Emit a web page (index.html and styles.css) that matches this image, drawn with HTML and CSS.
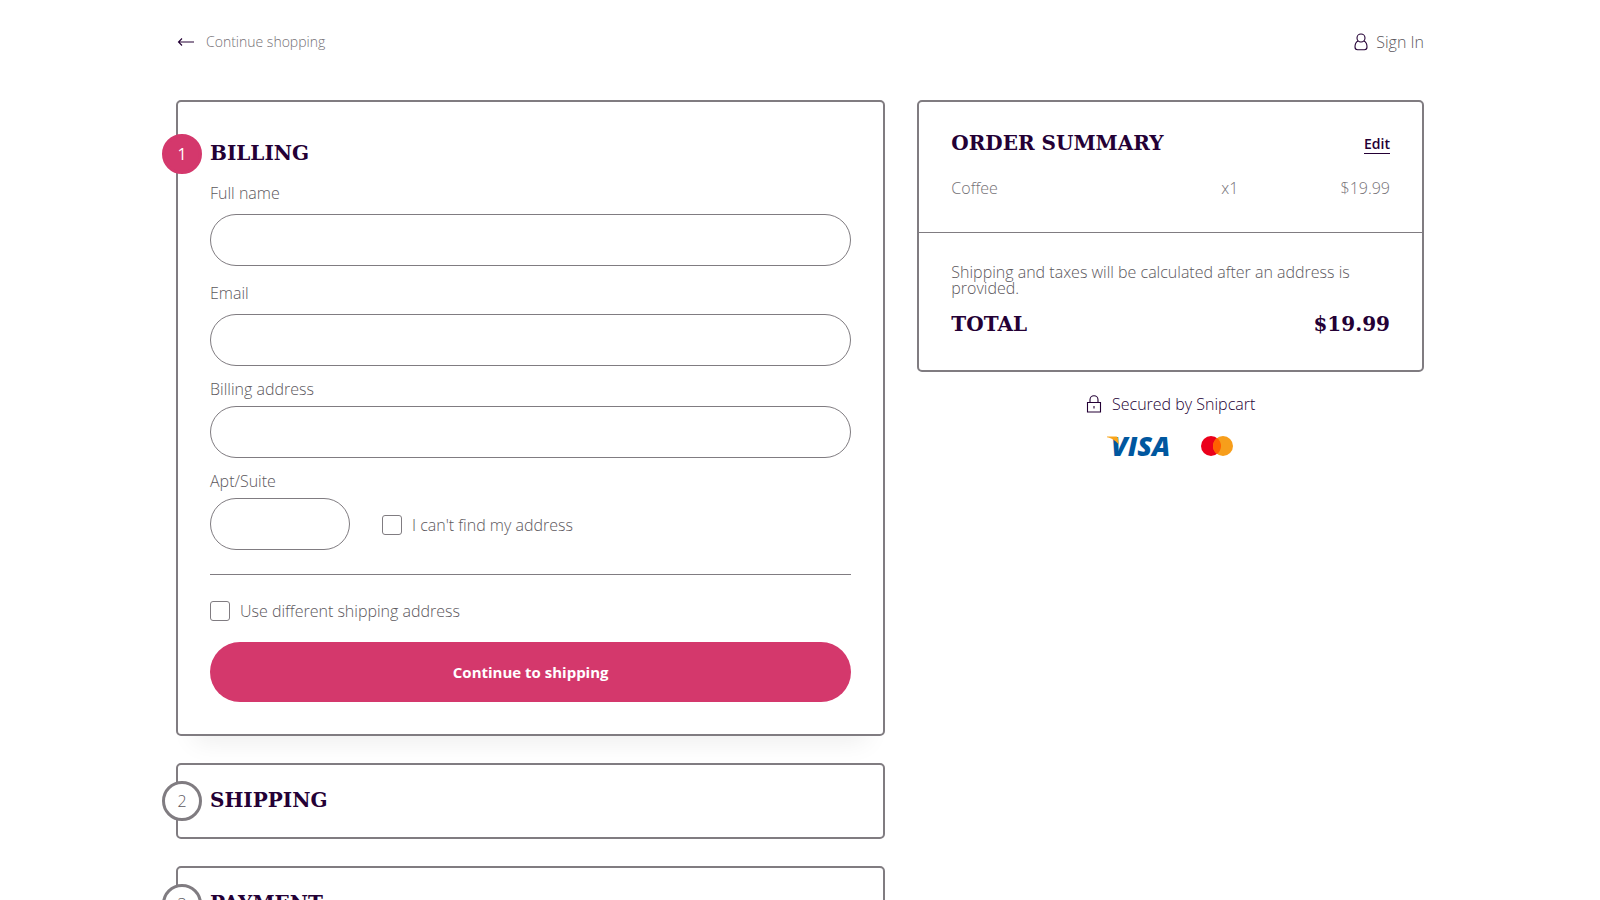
FILE: index.html
```html
<!DOCTYPE html>
<html lang="en">
<head>
<meta charset="utf-8">
<meta name="viewport" content="width=device-width, initial-scale=1">
<title>Checkout</title>
<link rel="stylesheet" href="styles.css">
</head>
<body>
<div class="page">
  <header class="topbar">
    <a class="back" href="#">
      <svg class="back-icon" width="18" height="10" viewBox="0 0 18 10" aria-hidden="true"><path d="M17 5H1.5M5 1.500 1.500 5 5 8.500"/></svg>
      <span>Continue shopping</span>
    </a>
    <a class="signin" href="#">
      <svg class="line-icon" width="14" height="18" viewBox="0 0 14 18" aria-hidden="true"><circle cx="7" cy="5" r="4"/><path d="M4 8C2 9 1 11 1 14c0 2 .7 2.700 2.500 2.700h7c1.800 0 2.500-.7 2.500-2.700 0-3-1-5-3-6"/></svg>
      <span>Sign In</span>
    </a>
  </header>
  <div class="columns">
    <main class="steps">
      <section class="card step step-active">
        <div class="step-head">
          <span class="badge badge-active">1</span>
          <h2 class="title">BILLING</h2>
        </div>
        <form class="form">
          <div class="field field-wide">
            <label for="name">Full name</label>
            <input class="text-input" id="name" type="text">
          </div>
          <div class="field field-wide">
            <label for="email">Email</label>
            <input class="text-input" id="email" type="email">
          </div>
          <div class="field">
            <label for="address">Billing address</label>
            <input class="text-input" id="address" type="text">
          </div>
          <div class="apt-row">
            <div class="field apt">
              <label for="apt">Apt/Suite</label>
              <input class="text-input" id="apt" type="text">
            </div>
            <label class="check check-apt"><input type="checkbox"><span>I can't find my address</span></label>
          </div>
          <hr class="rule">
          <label class="check"><input type="checkbox"><span>Use different shipping address</span></label>
          <button class="submit" type="button">Continue to shipping</button>
        </form>
      </section>
      <section class="card step">
        <div class="step-head">
          <span class="badge">2</span>
          <h2 class="title">SHIPPING</h2>
        </div>
      </section>
      <section class="card step">
        <div class="step-head">
          <span class="badge">3</span>
          <h2 class="title">PAYMENT</h2>
        </div>
      </section>
    </main>
    <aside class="side">
      <section class="card summary">
        <div class="summary-items">
          <div class="summary-head">
            <h2 class="title">ORDER SUMMARY</h2>
            <a class="edit" href="#">Edit</a>
          </div>
          <div class="item">
            <span>Coffee</span>
            <span class="qty">x1</span>
            <span class="price">$19.99</span>
          </div>
        </div>
        <div class="summary-total">
          <p class="note">Shipping and taxes will be calculated after an address is provided.</p>
          <div class="total title"><span>TOTAL</span><span>$19.99</span></div>
        </div>
      </section>
      <div class="secured">
        <svg class="line-icon" width="16" height="18" viewBox="0 0 16 18" aria-hidden="true"><path d="M1.500 7.500h13v9.500h-13zM4 7.500V4.800a4 4 0 0 1 8 0v2.700M8 11v2.500"/></svg>
        <span>Secured by Snipcart</span>
      </div>
      <div class="brands">
        <svg class="visa-logo" width="62" height="22" viewBox="0 0 62 22" role="img" aria-label="Visa">
          <text class="visa" x="4" y="21">VISA</text>
          <path fill="#f9a51a" d="M0 1.500h8.500c1.500 0 2.300.6 2.600 2L12 10C10 7 6 3.500 0 2.300z"/>
        </svg>
        <svg width="34" height="22" viewBox="0 0 34 22" role="img" aria-label="Mastercard">
          <circle cx="11" cy="11" r="10" fill="#eb001b"/>
          <circle cx="23" cy="11" r="10" fill="#f79e1b"/>
          <path fill="#ff5f00" d="M17 3a10 10 0 0 1 0 16 10 10 0 0 1 0-16z"/>
        </svg>
      </div>
    </aside>
  </div>
</div>
</body>
</html>
```

FILE: styles.css
```css
* { box-sizing: border-box; }

body {
  margin: 0;
  background: #fff;
  color: #5c585d;
  font: 300 16px/20px "Open Sans", sans-serif;
}

a { color: inherit; text-decoration: none; }

.page { width: 78%; margin: 0 auto; }

.topbar {
  display: flex;
  justify-content: space-between;
  align-items: center;
  padding: 32px 0 48px;
}

.back {
  display: flex;
  align-items: center;
  gap: 11px;
  padding-left: 1px;
  color: #757176;
  font-size: 14px;
}

.back-icon, .line-icon {
  fill: none;
  stroke: #240035;
  stroke-width: 1.1;
}

.signin { display: flex; align-items: center; gap: 8px; }

.columns {
  display: grid;
  grid-template-columns: 7fr 5fr;
  gap: 32px;
  align-items: start;
}

.steps { display: flex; flex-direction: column; gap: 27px; }

.card {
  border: 2px solid #807c81;
  border-radius: 5px;
  background: #fff;
}

.step { padding: 16px 32px; }

.step-active {
  padding: 32px;
  box-shadow: 0 24px 24px -18px rgba(0, 0, 0, 0.07);
}

.step-head { display: flex; align-items: center; gap: 8px; margin-left: -48px; }

.badge {
  display: grid;
  place-items: center;
  width: 40px;
  height: 40px;
  border: 3px solid #807c81;
  border-radius: 50%;
  background: #fff;
  line-height: 18px;
}

.badge-active {
  border-color: #d4386c;
  background: #d4386c;
  color: #fff;
  font-weight: 400;
}

.title {
  margin: 0;
  color: #240035;
  font: 900 20px/20px "DejaVu Serif", serif;
}

.step-head .title { padding-bottom: 2px; }

.form { display: flex; flex-direction: column; padding-top: 9px; }

.field { display: flex; flex-direction: column; gap: 7px; margin-bottom: 13px; }

.field-wide { gap: 11px; margin-bottom: 17px; }

.text-input {
  width: 100%;
  height: 52px;
  padding: 0 24px;
  border: 1px solid #807c81;
  border-radius: 26px;
  background: #fff;
  font: inherit;
}

.field-wide + .field:not(.field-wide) { margin-top: -4px; }

.apt-row { display: flex; align-items: flex-end; gap: 32px; }

.apt { width: 140px; margin: 0; }

.rule { width: 100%; margin: 24px 0 26px; border: 0; border-top: 1px solid #807c81; }

.check { display: flex; align-items: center; gap: 10px; }

.check-apt { padding-bottom: 15px; }

.check input {
  appearance: none;
  width: 20px;
  height: 20px;
  margin: 0;
  border: 1px solid #807c81;
  border-radius: 3px;
}

.submit {
  height: 60px;
  margin-top: 21px;
  border: 0;
  border-radius: 30px;
  background: #d4386c;
  color: #fff;
  font: 700 15px/20px "Open Sans", sans-serif;
}

.summary-items { padding: 29px 32px 34px; border-bottom: 1px solid #807c81; }

.summary-head { display: flex; justify-content: space-between; align-items: center; }

.edit {
  margin-top: 4px;
  border-bottom: 1px solid #240035;
  color: #240035;
  font: 600 14px/18px "Open Sans", sans-serif;
}

.item {
  display: grid;
  grid-template-columns: 8fr 2fr 3fr;
  padding-top: 24px;
  color: #757176;
}

.price { text-align: right; }

.summary-total { padding: 31px 32px 36px; }

.note { margin: 0; line-height: 16px; }

.total { display: flex; justify-content: space-between; padding-top: 18px; }

.secured {
  display: flex;
  justify-content: center;
  align-items: center;
  gap: 10px;
  padding-top: 22px;
  color: #240035;
}

.brands { display: flex; justify-content: center; gap: 31px; padding-top: 21px; }

.visa-logo { overflow: visible; }

.visa { fill: #00579f; font: italic 800 27px/20px "Open Sans", sans-serif; }
```
